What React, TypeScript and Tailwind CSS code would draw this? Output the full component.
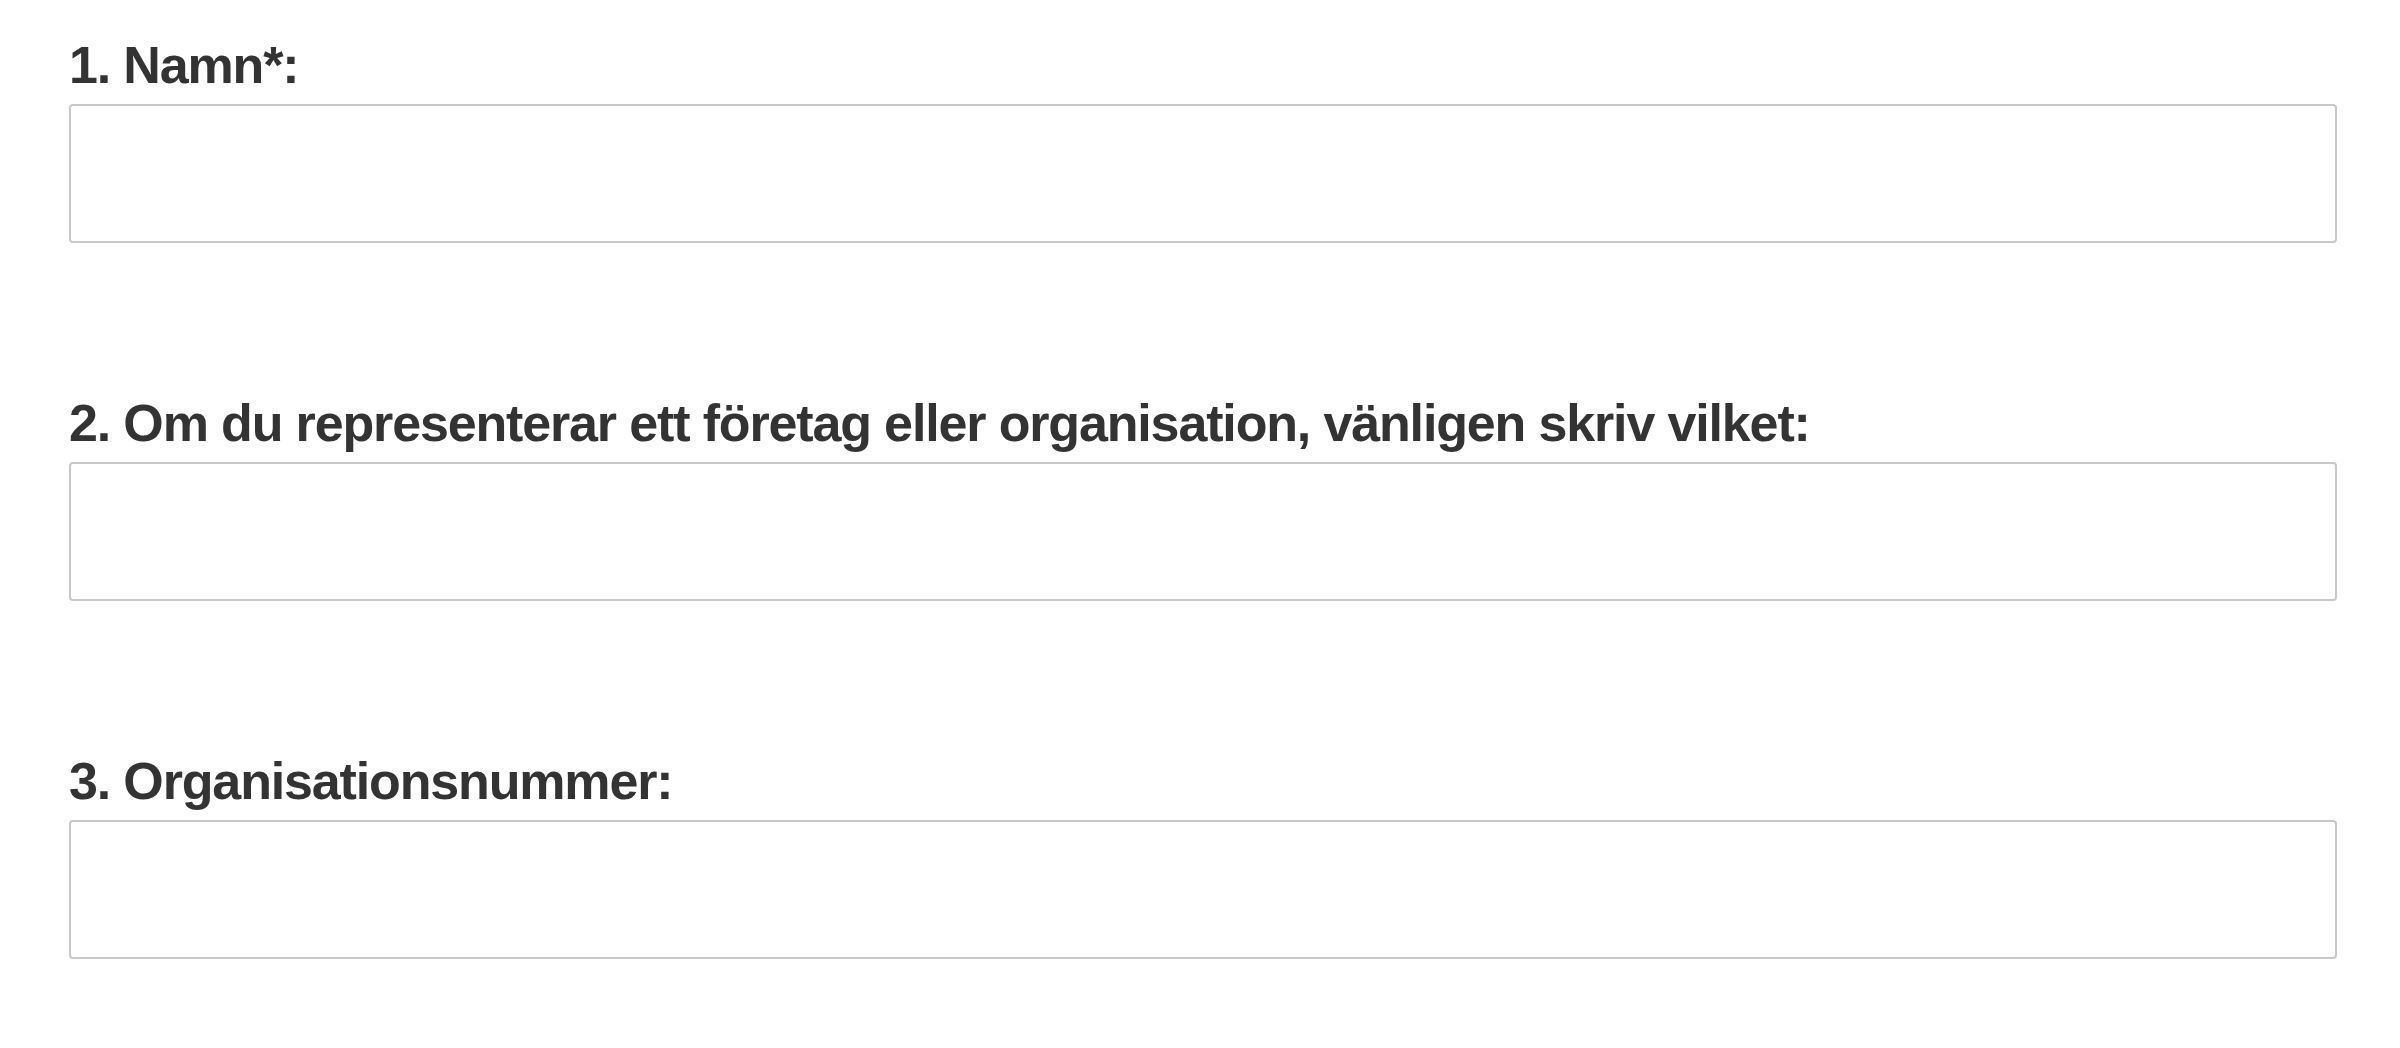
const fields = [
  { id: 'namn', label: '1. Namn*:' },
  {
    id: 'foretag',
    label:
      '2. Om du representerar ett företag eller organisation, vänligen skriv vilket:',
  },
  { id: 'orgnr', label: '3. Organisationsnummer:' },
]

export default function App() {
  return (
    <div className="min-h-screen bg-white pt-[35px] pl-[69px] pr-[63px] font-['Liberation_Sans',Arial,sans-serif]">
      <form className="flex flex-col gap-[150px]">
        {fields.map((field) => (
          <div key={field.id} className="flex flex-col gap-[9px]">
            <label
              htmlFor={field.id}
              className="text-[52px] leading-[60px] font-bold tracking-[-1.15px] text-[#333333]"
            >
              {field.label}
            </label>
            <input
              id={field.id}
              type="text"
              className="h-[139px] w-full rounded-[4px] border-2 border-[#c8c8c8] bg-white px-4 text-[40px] outline-none"
            />
          </div>
        ))}
      </form>
    </div>
  )
}
